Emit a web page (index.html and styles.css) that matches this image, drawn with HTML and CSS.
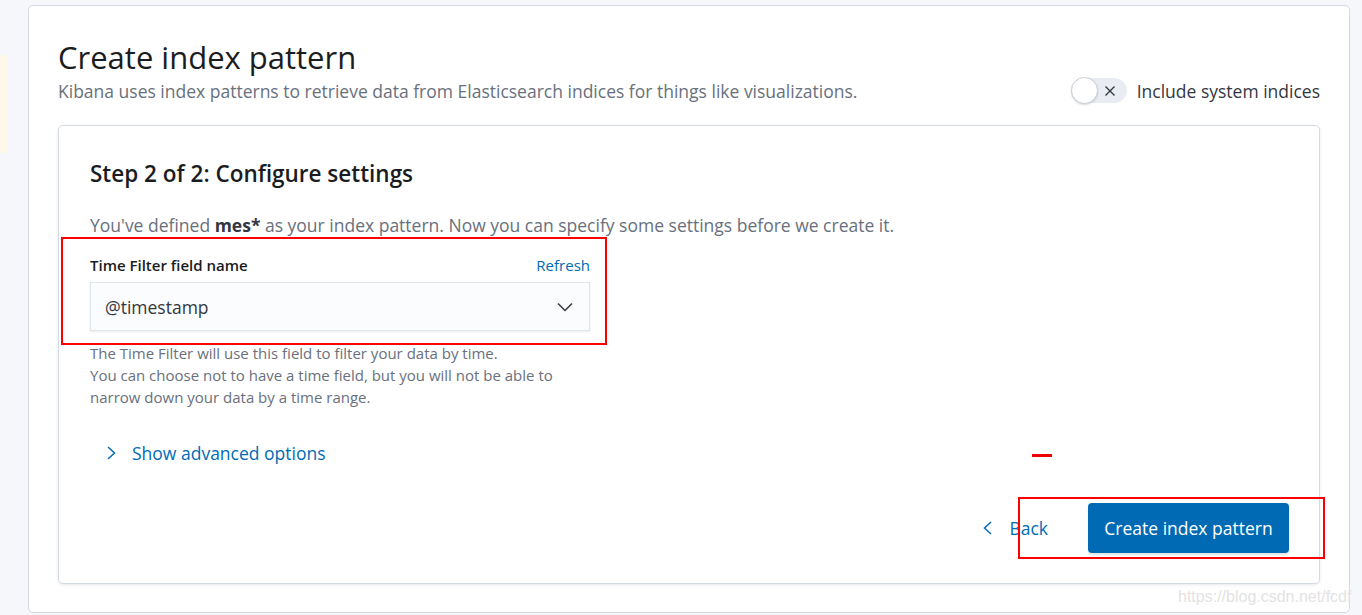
FILE: index.html
```html
<!DOCTYPE html>
<html lang="en">
<head>
<meta charset="utf-8">
<title>Create index pattern</title>
<link rel="stylesheet" href="styles.css">
</head>
<body>
<div class="layout">
  <div class="gutter"><div class="strip"></div></div>
  <main class="panel">
    <div class="header">
      <div class="header-text">
        <h1 class="title">Create index pattern</h1>
        <p class="subtitle">Kibana uses index patterns to retrieve data from Elasticsearch indices for things like visualizations.</p>
      </div>
      <div class="switch-wrap">
        <span class="switch">
          <span class="knob"></span>
          <svg class="switch-x" width="16" height="16" viewBox="0 0 16 16"><path d="M3.5 3.5 L12.5 12.5 M12.5 3.5 L3.5 12.5" stroke="#343741" stroke-width="1.4" fill="none"/></svg>
        </span>
        <span class="switch-label">Include system indices</span>
      </div>
    </div>

    <section class="card">
      <h2 class="step">Step 2 of 2: Configure settings</h2>
      <p class="desc">You've defined <strong>mes*</strong> as your index pattern. Now you can specify some settings before we create it.</p>

      <div class="field">
        <div class="field-head">
          <span class="field-label">Time Filter field name</span>
          <span class="link">Refresh</span>
        </div>
        <div class="select">
          <span class="select-value">@timestamp</span>
          <svg class="select-arrow" width="18" height="18" viewBox="0 0 18 18"><path d="M2 5.5 L9 12.5 L16 5.5" stroke="#343741" stroke-width="1.5" fill="none"/></svg>
        </div>
        <div class="help">The Time Filter will use this field to filter your data by time.<br>You can choose not to have a time field, but you will not be able to<br>narrow down your data by a time range.</div>
        <div class="annot annot-field"></div>
      </div>

      <div class="advanced">
        <svg width="12" height="16" viewBox="0 0 12 16"><path d="M3 2 L9.5 8 L3 14" stroke="#006bb4" stroke-width="1.5" fill="none"/></svg>
        <span>Show advanced options</span>
      </div>
      <div class="dash-row"><span class="dash"></span></div>

      <div class="actions">
        <span class="back">
          <svg width="12" height="16" viewBox="0 0 12 16"><path d="M9 2 L2.5 8 L9 14" stroke="#006bb4" stroke-width="1.5" fill="none"/></svg>
          <span>Back</span>
        </span>
        <span class="primary">Create index pattern</span>
        <div class="annot annot-actions"></div>
      </div>
    </section>
  </main>
</div>
<div class="watermark">https://blog.csdn.net/fcdf</div>
</body>
</html>
```

FILE: styles.css
```css
* { box-sizing: border-box; }
html, body { margin: 0; padding: 0; }
body {
  background: #f5f7fa;
  font-family: "Open Sans", "Liberation Sans", sans-serif;
  color: #343741;
  width: 1362px;
  height: 615px;
  overflow: hidden;
  position: relative;
}
.layout { display: flex; align-items: flex-start; }
.gutter { width: 28px; flex: none; }
.strip { width: 8px; height: 98px; margin-top: 55px; background: #fef8ea; }
.panel {
  width: 1322px;
  height: 608px;
  margin-top: 5px;
  background: #fff;
  border: 1px solid #d3dae6;
  border-radius: 5px;
  padding: 0 29px 0 29px;
}
.header { display: flex; justify-content: space-between; align-items: flex-end; padding-top: 32px; }
.title { margin: 0; font-size: 31px; font-weight: 400; line-height: 38px; color: #1a1c21; letter-spacing: 0; }
.subtitle { margin: 3px 0 0; font-size: 17.5px; line-height: 24px; color: #69707d; }
.switch-wrap { display: flex; align-items: center; gap: 10px; }
.switch { position: relative; width: 56px; height: 25px; border-radius: 13px; background: #e9edf3; display: inline-block; }
.knob { position: absolute; left: 0; top: -1px; width: 27px; height: 27px; border-radius: 50%; background: #fff; border: 1px solid #c9cfd8; box-shadow: 0 1px 2px rgba(0,0,0,.15); }
.switch-x { position: absolute; left: 31px; top: 5px; }
.switch-label { font-size: 17.5px; color: #343741; }

.card {
  margin-top: 22px;
  height: 459px;
  border: 1px solid #d3dae6;
  border-radius: 5px;
  box-shadow: 0 1px 3px rgba(152,162,179,.25);
  padding: 32px 31px 0 31px;
  position: relative;
}
.step { margin: 0; font-size: 22.5px; font-weight: 600; line-height: 32px; color: #1a1c21; }
.desc { margin: 23px 0 0; font-size: 17.5px; line-height: 24px; color: #69707d; }
.desc strong { color: #343741; font-weight: 700; }

.field { position: relative; width: 500px; margin-top: 16px; }
.field-head { display: flex; justify-content: space-between; align-items: baseline; }
.field-label { font-size: 15px; font-weight: 600; color: #1a1c21; line-height: 24px; }
.link { font-size: 15px; color: #006bb4; line-height: 24px; }
.select {
  margin-top: 5px;
  height: 49px;
  background: #fbfcfd;
  border: 1px solid #e0e4eb;
  box-shadow: 0 1px 2px rgba(0,0,0,.08);
  display: flex;
  align-items: center;
  justify-content: space-between;
  padding: 0 15px 0 14px;
}
.select-value { font-size: 17.5px; color: #343741; }
.help { margin-top: 11px; font-size: 15px; line-height: 22px; color: #69707d; }
.annot { position: absolute; border: 2px solid #ff0000; pointer-events: none; }
.annot-field { left: -29px; top: -16px; width: 546px; height: 108px; }

.advanced { display: flex; align-items: center; gap: 15px; margin-top: 33px; padding-left: 15px; color: #006bb4; font-size: 17.5px; line-height: 24px; }
.dash-row { position: relative; height: 0; }
.dash { position: absolute; left: 942px; top: -11px; width: 20px; height: 3px; background: #ee0000; }

.actions { position: absolute; right: 30px; bottom: 30px; display: flex; align-items: center; gap: 40px; }
.back { display: flex; align-items: center; gap: 15px; color: #006bb4; font-size: 17.5px; }
.primary { display: inline-flex; align-items: center; justify-content: center; width: 201px; height: 50px; background: #006bb4; color: #fff; border-radius: 4px; font-size: 17.5px; box-shadow: 0 2px 2px rgba(0,0,0,.1); }
.annot-actions { right: -36px; top: -6px; width: 307px; height: 62px; }

.watermark { position: absolute; left: 1178px; top: 588px; font-family: "Liberation Sans", Arial, sans-serif; font-size: 16px; color: #e3e3e3; }
```
